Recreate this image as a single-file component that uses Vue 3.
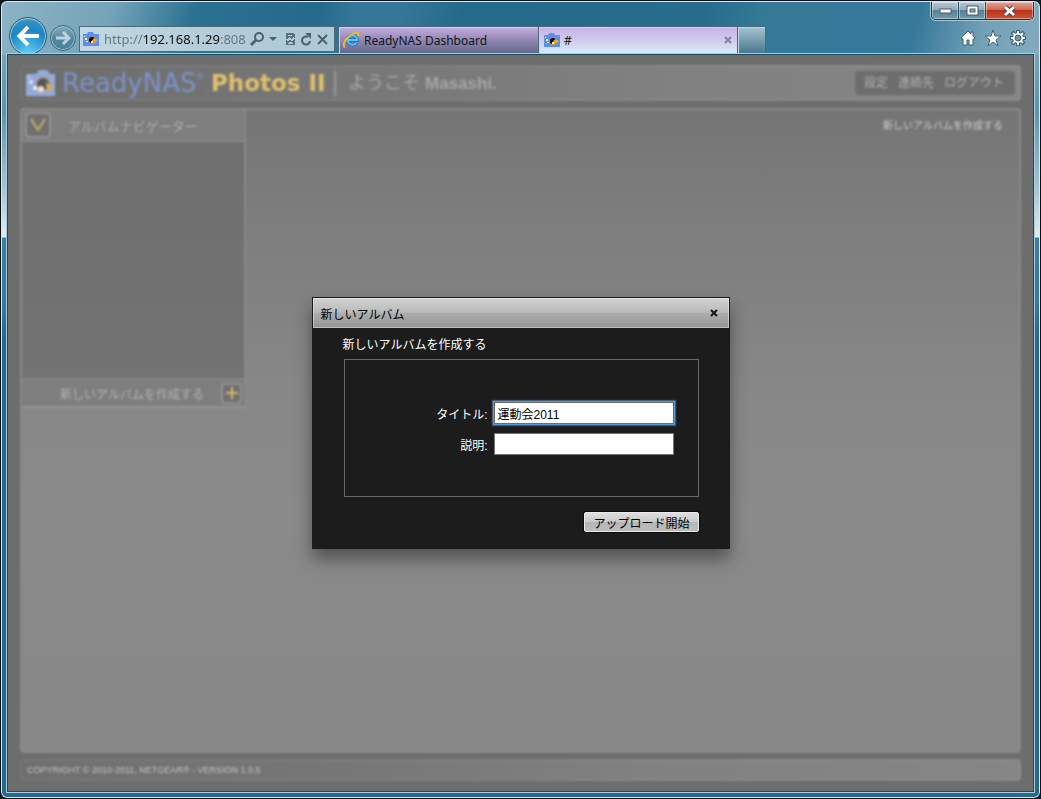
<script setup>
import { ref } from 'vue'

const address = ref('http://192.168.1.29:8086/photos')
const title = ref('運動会2011')
const description = ref('')
const menu = ['設定', '連絡先', 'ログアウト']
</script>

<template>
  <div class="window">
    <header class="chrome">
      <div class="travel">
        <button class="back" aria-label="戻る">
          <svg width="24" height="22" viewBox="0 0 24 22"><path d="M12 2 3.500 11l8.500 9M4 11h19" fill="none" stroke="#fff" stroke-width="4" /></svg>
        </button>
        <button class="forward" aria-label="進む">
          <svg width="16" height="16" viewBox="0 0 16 16"><path d="M8 2l6 6-6 6M14 8H1" fill="none" stroke="#b9d3df" stroke-width="3" /></svg>
        </button>
      </div>
      <div class="address">
        <svg class="fav" width="16" height="14" viewBox="0 0 16 14"><path d="M0 2h4l1-2h5l1 2h5v12H0z" fill="#5b8ff0" /><circle cx="9" cy="8" r="4" fill="#8a8a8a" /><circle cx="9" cy="8" r="3" fill="#0b0b0b" /><path d="M11 6l4 2-4 3-3 1v-2z" fill="#ffa01c" /><circle cx="9" cy="10" r="1" fill="#fff" /><path d="M1 4h1v1H1zM2 6h2v2H2zM3 9h2v1H3z" fill="#fff" /></svg>
        <input v-model="address" class="url" type="text" aria-label="アドレス" />
        <button class="tool" aria-label="検索"><svg width="14" height="14" viewBox="0 0 14 14"><circle cx="9" cy="5" r="4" fill="none" stroke="#4d626d" stroke-width="2" /><path d="M6 8l-5 5" stroke="#4d626d" stroke-width="3" /></svg></button>
        <button class="tool caret" aria-label="候補"><svg width="8" height="5" viewBox="0 0 8 5"><path d="M0 0h8L4 4z" fill="#4d626d" /></svg></button>
        <button class="tool broken" aria-label="互換表示"><svg width="9" height="12" viewBox="0 0 9 12" shape-rendering="crispEdges"><path d="M0 0h7l2 2v3L7 4 5 6 3 4 1 6H0zM0 7l2 1 2-1 2 1 3-2v6H0z" fill="#5b707b" /><path d="M2 2h4v1H2zM2 10l2-1 3 1v1H2z" fill="#b3cdd9" /></svg></button>
        <button class="tool reload" aria-label="更新"><svg width="12" height="13" viewBox="0 0 12 13"><path d="M8 4a4 4 0 1 0 2 4" fill="none" stroke="#4d626d" stroke-width="2" /><path d="M5 0h6v6z" fill="#4d626d" /></svg></button>
        <button class="tool" aria-label="中止"><svg width="11" height="11" viewBox="0 0 11 11"><path d="M1 1l9 9M10 1l-9 9" stroke="#4d626d" stroke-width="2" /></svg></button>
      </div>
      <nav class="tabs">
        <button class="tab">
          <svg width="17" height="18" viewBox="0 0 18 18"><path d="M14 12A5 5 0 1 1 15 9H5" fill="none" stroke="#1675bd" stroke-width="4" /><path d="M14 12A5 5 0 1 1 15 9H5" fill="none" stroke="#63c4f3" stroke-width="2" /><path d="M2 17C-2 14 5 4 12 2c4-2 5 0 4 3" fill="none" stroke="#f3bd20" stroke-width="2" /></svg>
          <span>ReadyNAS Dashboard</span>
        </button>
        <div class="tab active">
          <svg class="fav" width="16" height="14" viewBox="0 0 16 14"><path d="M0 2h4l1-2h5l1 2h5v12H0z" fill="#5b8ff0" /><circle cx="9" cy="8" r="4" fill="#8a8a8a" /><circle cx="9" cy="8" r="3" fill="#0b0b0b" /><path d="M11 6l4 2-4 3-3 1v-2z" fill="#ffa01c" /><circle cx="9" cy="10" r="1" fill="#fff" /><path d="M1 4h1v1H1zM2 6h2v2H2zM3 9h2v1H3z" fill="#fff" /></svg>
          <span>#</span>
          <button class="tab-close" aria-label="タブを閉じる"><svg width="8" height="8" viewBox="0 0 8 8"><path d="M1 1l6 6M7 1L1 7" stroke="#8a819c" stroke-width="2" /></svg></button>
        </div>
        <button class="new-tab" aria-label="新しいタブ"></button>
      </nav>
      <div class="right">
        <div class="caption">
          <button aria-label="最小化"><svg width="13" height="6" viewBox="0 0 13 6"><rect x="1" y="1" width="11" height="4" fill="#fff" stroke="#4b5a6b" /></svg></button>
          <button aria-label="最大化"><svg width="13" height="11" viewBox="0 0 13 11"><rect x="1" y="1" width="11" height="9" fill="#fff" stroke="#4b5a6b" /><rect x="4" y="4" width="5" height="3" fill="#8eabba" stroke="#4b5a6b" /></svg></button>
          <button class="quit" aria-label="閉じる"><svg width="13" height="12" viewBox="0 0 13 12"><path d="M2 2l9 8M11 2L2 10" stroke="#5b3c44" stroke-width="5" /><path d="M2 2l9 8M11 2L2 10" stroke="#fff" stroke-width="3" /></svg></button>
        </div>
        <div class="commands">
          <button aria-label="ホーム"><svg width="16" height="16" viewBox="0 0 16 16"><path d="M8 1l3 3V2h2v4l2 2-1 1h-1v6H9v-5H7v5H3V9H2L1 8z" fill="#fff" stroke="#3b6478" stroke-width="1" /></svg></button>
          <button aria-label="お気に入り"><svg width="16" height="16" viewBox="0 0 16 16"><path d="M8 0l2 6h6l-5 4 2 6-5-4-5 4 2-6-5-4h6z" fill="#fff" stroke="#3b6478" stroke-width="1" /></svg></button>
          <button aria-label="ツール"><svg width="16" height="16" viewBox="0 0 16 16"><path d="M8 0v16M0 8h16M2 2l12 12M14 2L2 14" stroke="#3b6478" stroke-width="4" /><circle cx="8" cy="8" r="6" fill="#3b6478" /><path d="M8 1v14M1 8h14M3 3l10 10M13 3L3 13" stroke="#fff" stroke-width="2" /><circle cx="8" cy="8" r="5" fill="#fff" /><circle cx="8" cy="8" r="3" fill="#6b97ab" stroke="#3b6478" /></svg></button>
        </div>
      </div>
    </header>

    <div class="viewport">
      <div class="page">
        <div class="banner">
          <svg class="camera" width="30" height="26" viewBox="0 0 30 26"><path d="M1 4h9l3-4h8l3 4h5v22H0V4z" fill="#93aadd" /><circle cx="17" cy="14" r="9" fill="#a5a5ad" /><circle cx="17" cy="14" r="6" fill="#555" /><path d="M20 12l8 6-7 4z" fill="#d8aa55" /><circle cx="15" cy="19" r="3" fill="#f2e6d2" /><circle cx="9" cy="18" r="2" fill="#fff" /><circle cx="5" cy="12" r="2" fill="#e4eaf6" /><circle cx="3" cy="7" r="1" fill="#e4eaf6" /></svg>
          <span class="brand">ReadyNAS<sup>®</sup></span>
          <span class="product">Photos II</span>
          <span class="welcome">ようこそ <b>Masashi.</b></span>
          <nav class="menu"><a v-for="m in menu" :key="m" href="#">{{ m }}</a></nav>
        </div>

        <main class="main">
          <aside class="navigator">
            <div class="nav-head">
              <button class="square" aria-label="開閉"><svg width="16" height="14" viewBox="0 0 16 14"><path d="M1 1l7 11 7-11" fill="none" stroke="#c8b06a" stroke-width="2" /></svg></button>
              <span>アルバムナビゲーター</span>
            </div>
            <div class="nav-list"></div>
            <div class="nav-foot">
              <span>新しいアルバムを作成する</span>
              <button class="square small" aria-label="追加"><svg width="12" height="12" viewBox="0 0 12 12"><path d="M6 0v12M0 6h12" stroke="#d2b86c" stroke-width="2" /></svg></button>
            </div>
          </aside>
          <a class="create" href="#">新しいアルバムを作成する</a>
        </main>

        <footer class="footer">COPYRIGHT © 2010-2011, NETGEAR® - VERSION 1.0.5</footer>
      </div>

      <div class="overlay">
        <form class="dialog" role="dialog" aria-labelledby="dialog-title" @submit.prevent>
          <div class="dialog-head">
            <span id="dialog-title">新しいアルバム</span>
            <button type="button" class="dialog-close" aria-label="閉じる"><svg width="8" height="8" viewBox="0 0 8 8"><path d="M1 1l6 6M7 1L1 7" stroke="#141414" stroke-width="2" /></svg></button>
          </div>
          <div class="dialog-body">
            <p>新しいアルバムを作成する</p>
            <div class="fields">
              <label for="album-title">タイトル:</label>
              <input id="album-title" v-model="title" class="focused" type="text" />
              <label for="album-desc">説明:</label>
              <input id="album-desc" v-model="description" type="text" />
            </div>
            <button class="submit">アップロード開始</button>
          </div>
        </form>
      </div>
    </div>
  </div>
</template>

<style>
body {
  background: #0b1a26;
}
</style>

<style scoped>
* {
  box-sizing: border-box;
}
button {
  padding: 0;
  border: 0;
  background: none;
  color: inherit;
  font: inherit;
  display: flex;
  align-items: center;
  justify-content: center;
}
svg {
  display: block;
  flex: none;
}
a {
  color: inherit;
  text-decoration: none;
}
.window {
  min-height: 100vh;
  display: flex;
  flex-direction: column;
  padding: 1px 5px 5px;
  border: 1px solid #071018;
  border-radius: 7px;
  box-shadow: inset 0 0 0 1px #d5ebf5;
  font-family: "Liberation Sans", "Noto Sans CJK JP", sans-serif;
  font-size: 12px;
  background:
    linear-gradient(105deg, #8cb3c5 0, #74a3b8 110px, #2b7192 190px, #256a8b 310px, #357798 345px, #357798 390px, #256a8b 450px, #276c8d 680px, #357898 740px, #37799a 890px, #75a1b6 960px, #83abbe 100%) 0 0 / 100% 54px no-repeat,
    linear-gradient(#74a3b8 54px, #5c94ae 110px, #a9c6d3 190px, #e2ecf1 236px, #3a7f9f 237px, #37799a 300px, #236a8c 340px, #236a8c);
}
.chrome {
  height: 51px;
  display: flex;
  align-items: flex-end;
  overflow: hidden;
}
.travel {
  display: flex;
  align-items: center;
  width: 73px;
  height: 34px;
  padding-left: 3px;
  gap: 3px;
}
.back {
  width: 38px;
  height: 38px;
  flex: none;
  border: 1px solid #355d72;
  border-radius: 50%;
  background: radial-gradient(circle at 50% 100%, #65d0f6 0, #1b87c5 60%, #2f8fc6 80%, #79b8dc 100%);
  box-shadow: inset 0 0 0 1px #9fcbe2;
}
.forward {
  width: 26px;
  height: 26px;
  margin-top: 3px;
  flex: none;
  border: 1px solid #426a7d;
  border-radius: 50%;
  background: linear-gradient(#87adbe, #5488a0 50%, #4b819a);
  box-shadow: inset 0 0 0 1px #9dbfce;
}
.address {
  display: flex;
  align-items: center;
  width: 256px;
  height: 26px;
  margin-bottom: 1px;
  padding: 0 6px 0 3px;
  border: 1px solid #4d6a78;
  background: linear-gradient(90deg, #c3d8e2, #b3cdd9 50%, #adc9d6);
}
.url {
  flex: 1;
  min-width: 0;
  height: 22px;
  margin: 0 0 0 5px;
  padding: 0;
  border: 0;
  outline: 0;
  font: 13px "Noto Sans", sans-serif;
  color: transparent;
  background: linear-gradient(90deg, #64747c 38px, #0a0e10 38px, #0a0e10 115px, #64747c 115px);
  background-clip: text;
}
.tool {
  margin-left: 5px;
}
.caret {
  margin-left: 5px;
}
.broken {
  margin-left: 9px;
}
.tabs {
  display: flex;
  height: 27px;
  margin-left: 3px;
}
.tab {
  display: flex;
  align-items: center;
  justify-content: flex-start;
  width: 201px;
  padding: 0 5px 0 4px;
  gap: 4px;
  border: 1px solid #4a6878;
  border-bottom: 0;
  font: 12px "Noto Sans", sans-serif;
  color: #10131c;
  background: linear-gradient(#c5aee3, #9288b2 50%, #62698a);
  box-shadow: inset 1px 1px #d9cbec;
}
.tab.active {
  width: 199px;
  padding-left: 5px;
  border-left: 0;
  background: linear-gradient(#c8b0e6, #d0cbed 50%, #d3eaf6);
}
.tab-close {
  margin-left: auto;
}
.new-tab {
  width: 28px;
  border: 1px solid #4a6878;
  border-left: 0;
  border-bottom: 0;
  background: linear-gradient(#a4c4d1, #6e97a9 60%, #4c788d);
  box-shadow: inset 1px 1px #bdd7e2;
}
.right {
  margin-left: auto;
  align-self: stretch;
  display: flex;
  flex-direction: column;
}
.caption {
  display: flex;
  height: 18px;
  margin-right: 1px;
  border: 1px solid #1d3744;
  border-top: 0;
  border-radius: 0 0 5px 5px;
  box-shadow: 0 0 0 1px #a8c8d6;
  overflow: hidden;
}
.caption button {
  width: 27px;
  border-right: 1px solid #2f4c5a;
  background: linear-gradient(#b6c9d4, #91acba 45%, #517e92 46%, #6f9db0);
  box-shadow: inset 0 0 0 1px rgba(255, 255, 255, 0.4);
}
.caption .quit {
  width: 47px;
  border: 0;
  background: linear-gradient(#e0a298, #cf6b58 45%, #b92e18 46%, #ca5736);
}
.commands {
  display: flex;
  justify-content: flex-end;
  gap: 9px;
  padding: 10px 9px 0 0;
}
.viewport {
  position: relative;
  flex: 1;
  display: flex;
  border: 1px solid #a9cfdf;
  outline: 1px solid #1c4a5e;
  outline-offset: -2px;
  padding: 1px;
  background: #6d6d6d;
  background-clip: padding-box;
}
.page {
  flex: 1;
  display: flex;
  flex-direction: column;
  padding: 10px 12px;
  color: #b4b4b4;
  filter: blur(1px);
}
.banner {
  display: flex;
  align-items: center;
  height: 36px;
  padding: 0 4px;
  border: 2px solid rgba(255, 255, 255, 0.06);
  border-radius: 4px;
  background: linear-gradient(90deg, #6d6d6d, #787878 35%, #818181 65%, #868686) border-box;
}
.brand,
.product {
  flex: none;
  font-family: "DejaVu Sans", sans-serif;
  line-height: 32px;
  white-space: nowrap;
}
.brand {
  width: 155px;
  padding-left: 6px;
  font-size: 26px;
  color: #7d92c9;
}
.brand sup {
  font-size: 8px;
  line-height: 8px;
  vertical-align: 12px;
}
.product {
  width: 123px;
  font-size: 23px;
  font-weight: bold;
  color: #dfc26c;
}
.welcome {
  padding-left: 12px;
  border-left: 2px solid #999;
  font-size: 18px;
  line-height: 24px;
  white-space: nowrap;
  color: #a6a6a6;
}
.welcome b {
  font-size: 17px;
}
.menu {
  display: flex;
  gap: 10px;
  margin-left: auto;
  padding: 0 11px 0 9px;
  border-radius: 4px;
  background: #6d6d6d;
  line-height: 24px;
  color: #b0b0b0;
}
.main {
  flex: 1;
  display: flex;
  justify-content: space-between;
  align-items: flex-start;
  margin: 7px 0 6px;
  border: 2px solid #8a8a8a;
  border-radius: 4px;
  background: linear-gradient(#757575, #7d7d7d 100px, #888 290px, #8a8a8a 400px, #888);
}
.navigator {
  width: 224px;
  border-right: 2px solid #888;
  border-bottom: 2px solid #959595;
  background: #7e7e7e;
}
.nav-head {
  display: flex;
  align-items: center;
  gap: 17px;
  height: 32px;
  padding-left: 3px;
  border-bottom: 2px solid #888;
  font-size: 13px;
  color: #acacac;
}
.square {
  width: 26px;
  height: 26px;
  border: 2px solid #929292;
  border-radius: 4px;
  background: #707070;
}
.square.small {
  width: 21px;
  height: 21px;
}
.nav-list {
  height: 236px;
  background: linear-gradient(#6f6f6f, #737373);
}
.nav-foot {
  display: flex;
  align-items: center;
  justify-content: flex-end;
  gap: 17px;
  height: 28px;
  padding-right: 2px;
  border-top: 2px solid #848484;
}
.create {
  padding: 8px 16px;
  font-size: 10px;
  line-height: 16px;
  color: #ccc;
}
.footer {
  height: 22px;
  padding-left: 5px;
  border: 2px solid rgba(255, 255, 255, 0.05);
  border-radius: 4px;
  background: linear-gradient(90deg, #6f6f6f, #787878 35%, #828282 65%, #868686) border-box;
  font-size: 9px;
  line-height: 19px;
  color: #c4c4c4;
}
.overlay {
  position: absolute;
  inset: 0;
  display: flex;
  align-items: center;
  justify-content: center;
}
.dialog {
  width: 418px;
  border: 1px solid #1b1b1b;
  background: #1c1c1c;
  color: #fff;
  box-shadow: 0 10px 16px rgba(0, 0, 0, 0.4);
}
.dialog-head {
  display: flex;
  align-items: center;
  justify-content: space-between;
  height: 30px;
  padding: 0 11px 0 8px;
  background: linear-gradient(#d3d3d3, #b9b9b9 48%, #adadad 50%, #949494);
  box-shadow: inset 0 0 0 1px rgba(255, 255, 255, 0.4);
  color: #000;
}
.dialog-body {
  display: flex;
  flex-direction: column;
  padding: 8px 30px 16px;
}
.dialog-body p {
  margin: 0 0 5px;
  line-height: 18px;
}
.fields {
  display: grid;
  grid-template-columns: 1fr 180px;
  align-content: center;
  align-items: center;
  gap: 9px 6px;
  height: 138px;
  margin-left: 1px;
  padding: 1px 24px 0 0;
  border: 1px solid #686868;
}
.fields label {
  text-align: right;
}
.fields input {
  width: 100%;
  height: 22px;
  padding: 0 3px;
  border: 1px solid #777;
  outline: 0;
  background: #fff;
  color: #000;
  font: inherit;
}
.fields .focused {
  border-color: #706a66;
  box-shadow: 0 0 0 1px #5a9ad2, 0 0 1px 2px #3b5f80;
}
.submit {
  align-self: flex-end;
  height: 20px;
  margin-top: 15px;
  padding: 0 8px;
  border: 1px solid #e9e9e9;
  border-radius: 2px;
  background: linear-gradient(#dedede, #c9c9c9 48%, #b6b6b6 50%, #bcbcbc);
  box-shadow: 0 0 0 1px #0c0c0c;
  color: #000;
}
</style>
